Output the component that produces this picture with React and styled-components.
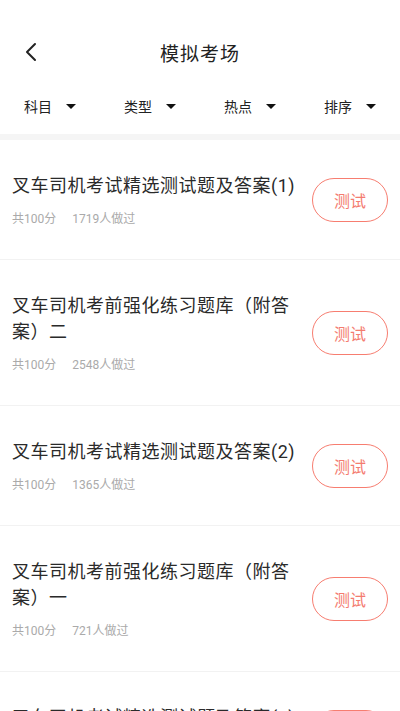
import React from 'react'
import styled, { createGlobalStyle } from 'styled-components'

const GlobalStyle = createGlobalStyle`
  html, body {
    margin: 0;
    padding: 0;
    background: #fff;
  }
  body {
    font-family: Roboto, 'Noto Sans CJK SC', 'Noto Sans', sans-serif;
    color: #222;
  }
`

const filters = ['科目', '类型', '热点', '排序']

const papers = [
  { title: '叉车司机考试精选测试题及答案(1)', count: 1719 },
  { title: '叉车司机考前强化练习题库（附答案）二', count: 2548 },
  { title: '叉车司机考试精选测试题及答案(2)', count: 1365 },
  { title: '叉车司机考前强化练习题库（附答案）一', count: 721 },
  { title: '叉车司机考试精选测试题及答案(3)', count: 986 },
]

const App = () => (
  <Page>
    <GlobalStyle />
    <TopBar>
      <BackButton aria-label="返回">
        <svg width="14" height="20" viewBox="0 0 14 20">
          <path d="M11 2 L3 10 L11 18" fill="none" stroke="#222" strokeWidth="2" strokeLinecap="round" strokeLinejoin="round" />
        </svg>
      </BackButton>
      <Title>模拟考场</Title>
    </TopBar>
    <FilterBar>
      {filters.map(name => (
        <Filter key={name}>
          <span>{name}</span>
          <Caret />
        </Filter>
      ))}
    </FilterBar>
    <Gap />
    <List>
      {papers.map(paper => (
        <Item key={paper.title}>
          <Info>
            <PaperTitle>{paper.title}</PaperTitle>
            <Meta>
              <span>共100分</span>
              <span>{paper.count}人做过</span>
            </Meta>
          </Info>
          <TestButton>测试</TestButton>
        </Item>
      ))}
    </List>
  </Page>
)

export default App

const Page = styled.div`
  width: 400px;
  height: 711px;
  overflow: hidden;
  background: #fff;
`

const TopBar = styled.div`
  position: relative;
  height: 64px;
  padding-top: 20px;
  display: flex;
  align-items: center;
  justify-content: center;
`

const BackButton = styled.div`
  position: absolute;
  left: 24px;
  top: 42px;
  display: flex;
`

const Title = styled.div`
  font-size: 19px;
  letter-spacing: 1px;
  color: #222;
`

const FilterBar = styled.div`
  display: grid;
  grid-template-columns: repeat(4, 1fr);
  height: 44px;
  padding-bottom: 6px;
`

const Filter = styled.div`
  display: flex;
  align-items: center;
  padding-left: 24px;
  gap: 14px;
  font-size: 14px;
  color: #222;
`

const Caret = styled.i`
  width: 0;
  height: 0;
  border-left: 5px solid transparent;
  border-right: 5px solid transparent;
  border-top: 5px solid #111;
`

const Gap = styled.div`
  height: 6px;
  background: #f5f5f5;
`

const List = styled.div`
  display: flex;
  flex-direction: column;
`

const Item = styled.div`
  display: flex;
  align-items: center;
  gap: 12px;
  padding: 33px 12px;
  border-bottom: 1px solid #f2f2f2;
`

const Info = styled.div`
  flex: 1;
  min-width: 0;
`

const PaperTitle = styled.div`
  font-size: 18px;
  line-height: 26px;
  letter-spacing: 0.5px;
  color: #2a2a2a;
`

const Meta = styled.div`
  display: flex;
  gap: 16px;
  margin-top: 13px;
  font-size: 12px;
  line-height: 14px;
  color: #aaa;
`

const TestButton = styled.div`
  flex: none;
  width: 74px;
  height: 42px;
  border: 1px solid #f77d70;
  border-radius: 22px;
  display: flex;
  align-items: center;
  justify-content: center;
  font-size: 16px;
  color: #f47c70;
`
